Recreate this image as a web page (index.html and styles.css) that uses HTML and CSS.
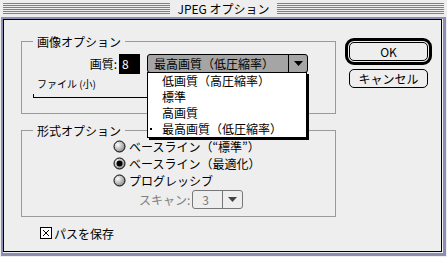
FILE: index.html
```html
<!DOCTYPE html>
<html lang="ja">
<head>
    <meta charset="UTF-8">
    <title>JPEG オプション</title>
    <link rel="stylesheet" href="styles.css">
</head>
<body>
    <div class="window">
        <div class="titlebar">
            <div class="stripes"></div>
            <span class="title">JPEG オプション</span>
            <div class="stripes"></div>
        </div>
        <div class="frame">
            <div class="dialog">
                <div class="main-col">
                    <fieldset class="group group-image">
                        <legend>画像オプション</legend>
                        <div class="quality-row">
                            <span class="field-label">画質:</span>
                            <span class="quality-field">8</span>
                            <div class="popup popup-quality">
                                <span class="popup-value">最高画質（低圧縮率）</span>
                                <span class="popup-arrow">
                                    <svg width="9" height="5" viewBox="0 0 9 5"><path d="M0 0h9L4.5 5z"/></svg>
                                </span>
                                <ul class="popup-menu">
                                    <li>低画質（高圧縮率）</li>
                                    <li>標準</li>
                                    <li>高画質</li>
                                    <li class="checked">最高画質（低圧縮率）</li>
                                </ul>
                            </div>
                        </div>
                        <div class="slider-label">ファイル (小)</div>
                        <div class="slider-track"></div>
                    </fieldset>

                    <fieldset class="group group-format">
                        <legend>形式オプション</legend>
                        <div class="radio">
                            <svg viewBox="0 0 13 13">
                                <defs>
                                    <radialGradient id="radio-fill" cx="35%" cy="35%" r="70%">
                                        <stop offset="0" stop-color="#fff"/>
                                        <stop offset="1" stop-color="#888"/>
                                    </radialGradient>
                                </defs>
                                <circle cx="6.5" cy="6.5" r="5.5" fill="url(#radio-fill)" stroke="#000"/>
                            </svg>
                            ベースライン（“標準”）
                        </div>
                        <div class="radio">
                            <svg viewBox="0 0 13 13">
                                <circle cx="6.5" cy="6.5" r="5.5" fill="url(#radio-fill)" stroke="#000"/>
                                <circle cx="6.5" cy="6.5" r="3" fill="#000"/>
                            </svg>
                            ベースライン（最適化）
                        </div>
                        <div class="radio">
                            <svg viewBox="0 0 13 13">
                                <circle cx="6.5" cy="6.5" r="5.5" fill="url(#radio-fill)" stroke="#000"/>
                            </svg>
                            プログレッシブ
                        </div>
                        <div class="scan-row">
                            <span class="scan-label">スキャン:</span>
                            <div class="popup popup-scan">
                                <span class="popup-value">3</span>
                                <span class="popup-arrow">
                                    <svg width="9" height="5" viewBox="0 0 9 5"><path d="M0 0h9L4.5 5z"/></svg>
                                </span>
                            </div>
                        </div>
                    </fieldset>

                    <div class="checkbox">
                        <svg viewBox="0 0 12 12">
                            <rect x="0.5" y="0.5" width="11" height="11" fill="#fff" stroke="#000"/>
                            <path d="M3 3l6 6M9 3l-6 6" stroke="#000"/>
                        </svg>
                        パスを保存
                    </div>
                </div>

                <div class="button-col">
                    <div class="default-ring">
                        <button class="button">OK</button>
                    </div>
                    <button class="button">キャンセル</button>
                </div>
            </div>
        </div>
    </div>
</body>
</html>
```

FILE: styles.css
```css
* {
    box-sizing: border-box;
}

:root {
    --bg: #eeeeee;
    --frame: #8e8eb2;
    --stripe: #808080;
    --group-line: #9a9a9a;
    --disabled: #777777;
}

body {
    margin: 0;
    background: var(--bg);
    font-family: "Noto Sans CJK JP", sans-serif;
    font-size: 12px;
    color: #000;
}

.window {
    width: 447px;
    height: 257px;
    padding: 0 1px 1px;
    display: flex;
    flex-direction: column;
    background: var(--bg);
}

/* title bar */
.titlebar {
    height: 17px;
    margin: 0 2px;
    display: flex;
    align-items: flex-start;
}

.stripes {
    flex: 1;
    height: 11px;
    margin-top: 3px;
    background: repeating-linear-gradient(var(--stripe) 0 1px, transparent 1px 2px);
}

.title {
    padding: 0 7px;
    height: 17px;
    line-height: 17px;
}

.frame {
    flex: 1;
    display: flex;
    border-style: solid;
    border-color: var(--frame);
    border-width: 2px 3px 3px 2px;
    padding: 0 1px 1px 0;
}

.dialog {
    flex: 1;
    display: flex;
    align-items: flex-start;
    border: 1px solid #000;
    padding-left: 17px;
}

.main-col {
    width: 315px;
    padding-top: 14px;
}

/* groups */
.group {
    margin: 0;
    padding: 0 0 15px;
    min-width: 0;
    border: 1px solid var(--group-line);
}

.group legend {
    margin-left: 11px;
    padding: 0 4px;
    line-height: 15px;
}

.group-format {
    margin-top: 9px;
    padding-bottom: 7px;
}

.quality-row {
    display: flex;
    align-items: flex-start;
    margin-top: 5px;
    padding-left: 64px;
}

.field-label {
    width: 31px;
    margin-right: 2px;
    text-align: right;
    line-height: 20px;
}

.quality-field {
    width: 21px;
    height: 20px;
    padding-left: 3px;
    background: #000;
    color: #fff;
    line-height: 20px;
}

.popup {
    position: relative;
    display: flex;
    height: 19px;
    border: 1px solid #000;
    border-radius: 3px;
}

.popup-value {
    flex: 1;
    padding-left: 6px;
    line-height: 17px;
    white-space: nowrap;
}

.popup-arrow {
    width: 19px;
    display: flex;
    align-items: center;
    justify-content: center;
    border-left: 1px solid #000;
}

.popup-quality {
    width: 161px;
    margin-left: 7px;
    background: #a5a5a5;
}

.popup-menu {
    position: absolute;
    left: -1px;
    top: 17px;
    width: 160px;
    margin: 0;
    padding: 0;
    list-style: none;
    background: #fff;
    border: 1px solid #000;
    box-shadow: 2px 2px 0 #000;
    z-index: 2;
}

.popup-menu li {
    position: relative;
    height: 16px;
    line-height: 16px;
    padding-left: 14px;
    white-space: nowrap;
}

.popup-menu li.checked::before {
    content: "";
    position: absolute;
    left: 2px;
    top: 7px;
    width: 2px;
    height: 2px;
    background: #000;
}

.slider-label {
    margin-top: 4px;
    padding-left: 15px;
    font-size: 10px;
    line-height: 12px;
}

.slider-track {
    width: 262px;
    height: 4px;
    margin: 4px 0 0 11px;
    border-left: 1px solid #000;
    border-bottom: 1px solid #000;
}

.radio {
    display: flex;
    align-items: center;
    height: 17px;
    padding-left: 91px;
    white-space: nowrap;
}

.radio svg {
    width: 13px;
    height: 13px;
    margin-right: 3px;
}

.scan-row {
    display: flex;
    align-items: center;
    margin-top: 1px;
    padding-left: 117px;
    color: #808080;
}

.scan-label {
    margin-right: 2px;
}

.popup-scan {
    width: 51px;
    border-color: var(--disabled);
    color: var(--disabled);
}

.popup-scan .popup-value {
    padding-left: 9px;
}

.popup-scan .popup-arrow {
    width: 20px;
    border-color: var(--disabled);
}

.popup-scan svg {
    fill: #444;
}

.checkbox {
    display: flex;
    align-items: center;
    height: 14px;
    margin-top: 9px;
    padding-left: 19px;
}

.checkbox svg {
    width: 12px;
    height: 12px;
    margin-right: 2px;
}

/* buttons */
.button-col {
    margin: 18px 0 0 9px;
    display: flex;
    flex-direction: column;
    align-items: center;
}

.default-ring {
    border: 3px solid #000;
    border-radius: 9px;
    padding: 1px;
}

.button {
    width: 79px;
    height: 19px;
    padding: 0;
    border: 1px solid #000;
    border-radius: 5px;
    background: var(--bg);
    font: inherit;
    line-height: 17px;
    color: #000;
    text-align: center;
}

.button-col > .button {
    margin-top: 4px;
}
```
